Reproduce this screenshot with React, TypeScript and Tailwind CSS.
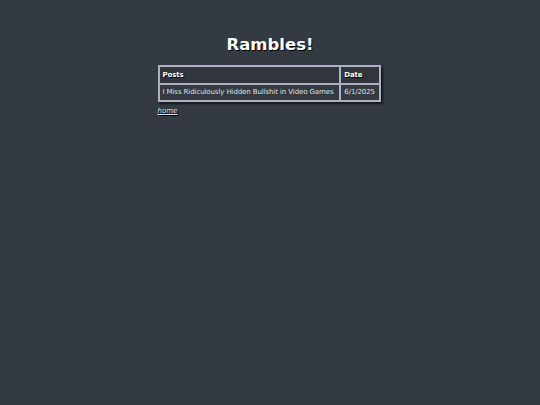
export default function App() {
  return (
    <div className="min-h-[405px] w-full bg-[#343a42] text-[#e6e6e6]" style={{ fontFamily: '"DejaVu Sans", Verdana, sans-serif' }}>
      <div className="flex flex-col items-center pt-[35px]">
        <h1 className="text-[16.5px] font-bold leading-[20px] text-white [text-shadow:1px_1px_0_#000]">Rambles!</h1>
        <div className="mt-[10px] w-[223px] -translate-x-[1px]">
          <table className="w-full border-separate border-spacing-[2px] bg-[#a9b3c4] shadow-[2px_2px_2px_rgba(0,0,0,0.6)] text-[7px] tracking-[-0.1px]">
            <thead>
              <tr>
                <th className="h-[16px] bg-[#31363d] px-[3px] text-left font-bold text-white [text-shadow:1px_1px_0_#000]">Posts</th>
                <th className="h-[16px] bg-[#31363d] px-[3px] text-left font-bold text-white [text-shadow:1px_1px_0_#000]">Date</th>
              </tr>
            </thead>
            <tbody>
              <tr>
                <td className="h-[15px] bg-[#353a41] px-[3px] text-[#dde0e4] whitespace-nowrap">I Miss Ridiculously Hidden Bullshit in Video Games</td>
                <td className="h-[15px] bg-[#353a41] px-[3px] text-[#dde0e4] whitespace-nowrap">6/1/2025</td>
              </tr>
            </tbody>
          </table>
          <a href="#" className="mt-[4px] block text-[7px] italic text-[#dde0e4] underline [text-shadow:1px_1px_0_#000]">home</a>
        </div>
      </div>
    </div>
  );
}
